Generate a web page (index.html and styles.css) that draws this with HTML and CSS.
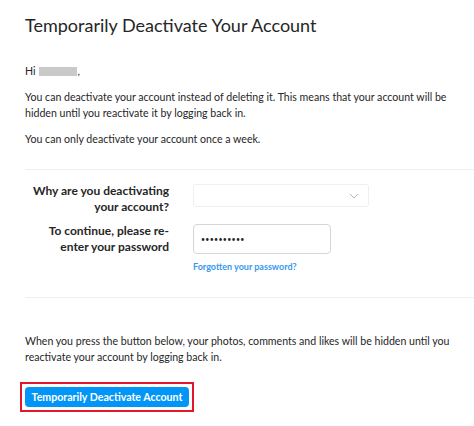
FILE: index.html
```html
<!DOCTYPE html>
<html lang="en">
<head>
<meta charset="utf-8">
<title>Temporarily Deactivate Your Account</title>
<link rel="stylesheet" href="styles.css">
</head>
<body>
<main class="page">
  <h1 class="title">Temporarily Deactivate Your Account</h1>
  <p class="hi">Hi <span class="redacted"></span>,</p>
  <p class="text">You can deactivate your account instead of deleting it. This means that your account will be hidden until you reactivate it by logging back in.</p>
  <p class="text">You can only deactivate your account once a week.</p>
  <hr class="divider">
  <div class="form">
    <div class="row">
      <label class="label">Why are you deactivating your account?</label>
      <div class="field">
        <div class="select">
          <svg class="chev" width="10" height="6" viewBox="0 0 10 6"><path d="M1 1l4 4 4-4" fill="none" stroke="#b5b5b5" stroke-width="1"/></svg>
        </div>
      </div>
    </div>
    <div class="row row-pw">
      <label class="label">To continue, please re-enter your password</label>
      <div class="field">
        <div class="input"><span class="dots">••••••••••</span></div>
        <a class="forgot" href="#">Forgotten your password?</a>
      </div>
    </div>
  </div>
  <hr class="divider divider2">
  <p class="text final">When you press the button below, your photos, comments and likes will be hidden until you reactivate your account by logging back in.</p>
  <div class="highlight"><button class="btn">Temporarily Deactivate Account</button></div>
</main>
</body>
</html>
```
FILE: styles.css
```css
html, body { margin: 0; padding: 0; background: #fff; }
body { font-family: "Lato", "Open Sans", sans-serif; color: #262626; }
.page { padding: 13px 0 0 25px; }
.title { margin: 0; font-size: 18px; font-weight: 400; line-height: 24px; color: #262626; }
.hi { margin: 26px 0 0; font-size: 10.6px; line-height: 16px; display: flex; align-items: center; }
.redacted { display: inline-block; width: 38px; height: 9px; background: #c9c9c9; margin: 0 1px 0 3px; }
.text { margin: 10px 0 0; font-size: 10.6px; line-height: 16px; width: 440px; }
.divider { border: 0; border-top: 1px solid #efefef; margin: 22px 0 0; }
.form { padding-top: 13px; }
.row { display: flex; gap: 24px; }
.row-pw { margin-top: 8px; }
.label { width: 144px; text-align: right; font-size: 12px; font-weight: 700; line-height: 16px; color: #262626; }
.field { display: flex; flex-direction: column; }
.select { width: 174px; height: 21px; border: 1px solid #efefef; border-radius: 3px; position: relative; margin-top: 1px; }
.chev { position: absolute; right: 9px; top: 8px; }
.input { border: 1px solid #d6d6d6; border-radius: 4px; display: flex; align-items: center; padding-left: 7px; box-sizing: border-box; width: 138px; height: 30px; margin-top: 1px; }
.dots { font-size: 7px; letter-spacing: 0.3px; color: #262626; }
.forgot { margin-top: 7px; font-size: 9px; font-weight: 700; line-height: 12px; color: #3897f0; text-decoration: none; }
.divider2 { margin-top: 24px; }
.final { margin-top: 35px; }
.highlight { display: inline-block; margin: 17px 0 0 -5px; border: 2px solid #e3172c; padding: 3px; }
.btn { display: block; background: #0095f6; color: #fff; border: 0; border-radius: 4px; font-family: "Lato", sans-serif; font-weight: 700; font-size: 10.6px; height: 20px; padding: 0; width: 164px; white-space: nowrap; }
```
